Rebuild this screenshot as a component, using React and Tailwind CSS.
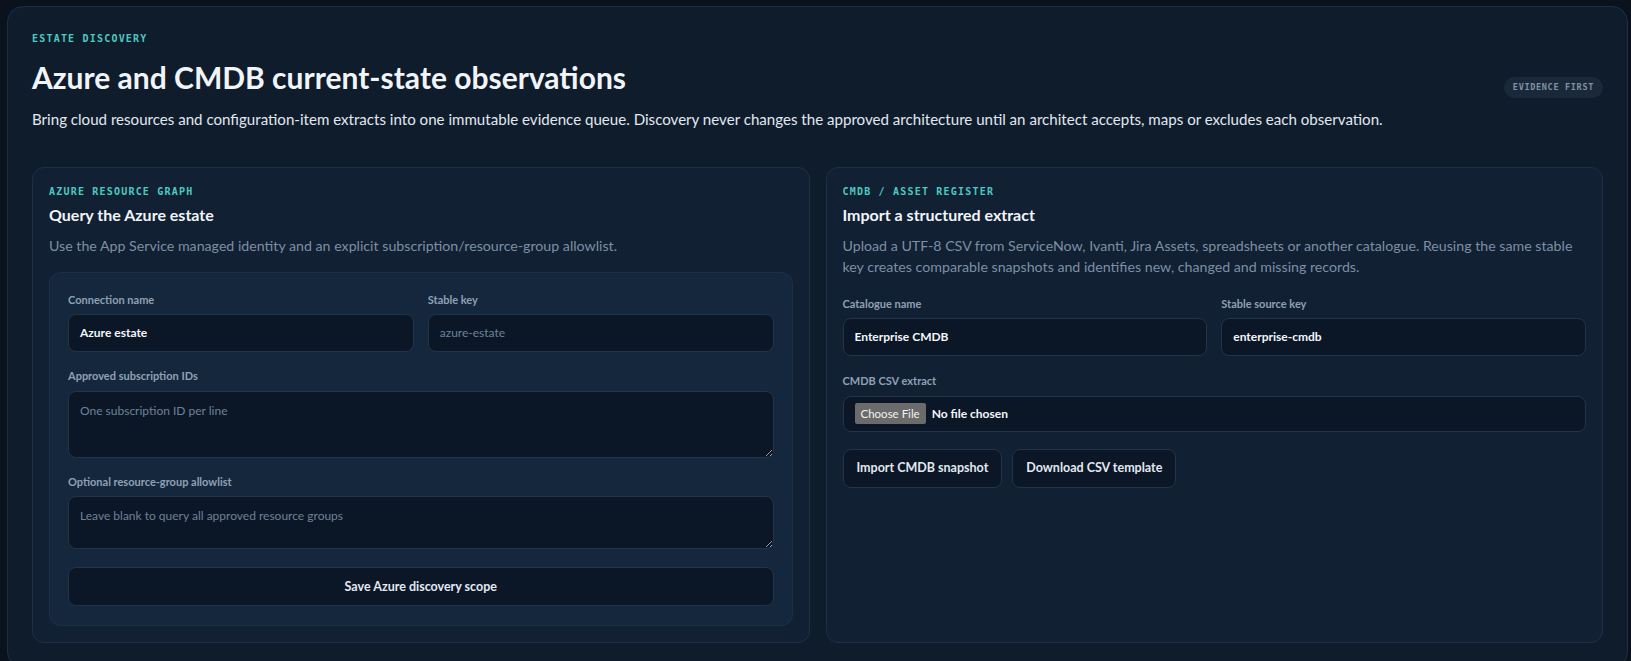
const SANS = { fontFamily: 'Lato, "Noto Sans", sans-serif' }

function Eyebrow({ children, className = '' }) {
  return (
    <p className={`font-['DejaVu_Sans_Mono',monospace] text-[10px] font-bold uppercase tracking-[0.12em] text-[#4cc9c0] ${className}`}>
      {children}
    </p>
  )
}

function Field({ label, children, className = '' }) {
  return (
    <label className={`flex flex-col ${className}`}>
      <span className="mb-[6px] text-[11px] font-bold text-[#8fa1b5]">{label}</span>
      {children}
    </label>
  )
}

function TextInput({ value, placeholder, className = '' }) {
  return (
    <div className={`flex h-[38px] items-center rounded-[8px] border border-[#22344b] bg-[#0b1726] px-[11px] text-[12px] ${className}`}>
      {value ? <span className="font-bold text-[#f3f6fa]">{value}</span> : <span className="text-[#6f8196]">{placeholder}</span>}
    </div>
  )
}

function Area({ placeholder, h }) {
  return (
    <textarea
      placeholder={placeholder}
      className={`${h} w-full rounded-[8px] border border-[#22344b] bg-[#0b1726] px-[11px] py-[10px] text-[12px] text-[#f3f6fa] outline-none [color-scheme:dark] placeholder:text-[#6f8196]`}
      style={SANS}
    />
  )
}

function Btn({ children, className = '' }) {
  return (
    <button className={`h-[39px] rounded-[8px] border border-[#22344b] bg-[#0b1726] px-[13px] text-[12.5px] font-bold text-[#e2e9f1] ${className}`}>
      {children}
    </button>
  )
}

function AzurePanel() {
  return (
    <section className="rounded-[12px] border border-[#1f3045] bg-[#112033] p-4">
      <Eyebrow>Azure resource graph</Eyebrow>
      <h2 className="mt-[4px] text-[16px] font-bold text-[#f1f5f9]">Query the Azure estate</h2>
      <p className="mt-[8px] text-[14.2px] text-[#7d8fa4]">
        Use the App Service managed identity and an explicit subscription/resource-group allowlist.
      </p>
      <div className="mt-[16px] rounded-[12px] border border-[#22385182] bg-[#14273d] px-[18px] pb-[19px] pt-[19px]">
        <div className="grid grid-cols-2 gap-[14px]">
          <Field label="Connection name"><TextInput value="Azure estate" /></Field>
          <Field label="Stable key"><TextInput placeholder="azure-estate" /></Field>
        </div>
        <Field label="Approved subscription IDs" className="mt-[16px]">
          <Area placeholder="One subscription ID per line" h="h-[67px]" />
        </Field>
        <Field label="Optional resource-group allowlist" className="mt-[16px]">
          <Area placeholder="Leave blank to query all approved resource groups" h="h-[53px]" />
        </Field>
        <Btn className="mt-[18px] w-full">Save Azure discovery scope</Btn>
      </div>
    </section>
  )
}

function CmdbPanel() {
  return (
    <section className="rounded-[12px] border border-[#1f3045] bg-[#112033] p-4">
      <Eyebrow>CMDB / asset register</Eyebrow>
      <h2 className="mt-[4px] text-[16px] font-bold text-[#f1f5f9]">Import a structured extract</h2>
      <p className="mt-[8px] text-[14.2px] leading-[21px] text-[#7d8fa4]">
        Upload a UTF-8 CSV from ServiceNow, Ivanti, Jira Assets, spreadsheets or another catalogue. Reusing the same stable
        key creates comparable snapshots and identifies new, changed and missing records.
      </p>
      <div className="mt-[19px] grid grid-cols-2 gap-[14px]">
        <Field label="Catalogue name"><TextInput value="Enterprise CMDB" /></Field>
        <Field label="Stable source key"><TextInput value="enterprise-cmdb" /></Field>
      </div>
      <Field label="CMDB CSV extract" className="mt-[17px]">
        <div className="flex h-[36px] items-center gap-[6px] rounded-[8px] border border-[#22344b] bg-[#0b1726] px-[11px] text-[12px]">
          <span className="rounded-[2px] bg-[#6b6b6b] px-[6px] py-[2px] text-[11.5px] text-[#f1f1f1]">Choose File</span>
          <span className="font-bold text-[#f3f6fa]">No file chosen</span>
        </div>
      </Field>
      <div className="mt-[17px] flex gap-[10px]">
        <Btn>Import CMDB snapshot</Btn>
        <Btn>Download CSV template</Btn>
      </div>
    </section>
  )
}

export default function App() {
  return (
    <div className="min-h-[661px] bg-[#0a121d] pl-[7px] pt-[6px]" style={SANS}>
      <div className="w-[1621px] rounded-[16px] border border-[#1e2e42] bg-[#0f1c2c] px-6 pb-6 pt-[21px]">
        <div className="flex items-center justify-between">
          <div>
            <Eyebrow className="mt-[3px]">Estate discovery</Eyebrow>
            <h1 className="mt-[11px] text-[30px] font-bold leading-[40px] text-[#f1f5f9]">
              Azure and CMDB current-state observations
            </h1>
            <p className="mt-[11px] text-[15.1px] text-[#e1e8f0]">
              Bring cloud resources and configuration-item extracts into one immutable evidence queue. Discovery never changes
              the approved architecture until an architect accepts, maps or excludes each observation.
            </p>
          </div>
          <span className="mt-[16px] rounded-full bg-[#1a2839] px-[9px] py-[4px] font-['DejaVu_Sans_Mono',monospace] text-[8.5px] font-bold uppercase tracking-[0.08em] text-[#7f91a6]">
            Evidence first
          </span>
        </div>
        <div className="mt-[36px] grid grid-cols-2 gap-4">
          <AzurePanel />
          <CmdbPanel />
        </div>
      </div>
    </div>
  )
}
